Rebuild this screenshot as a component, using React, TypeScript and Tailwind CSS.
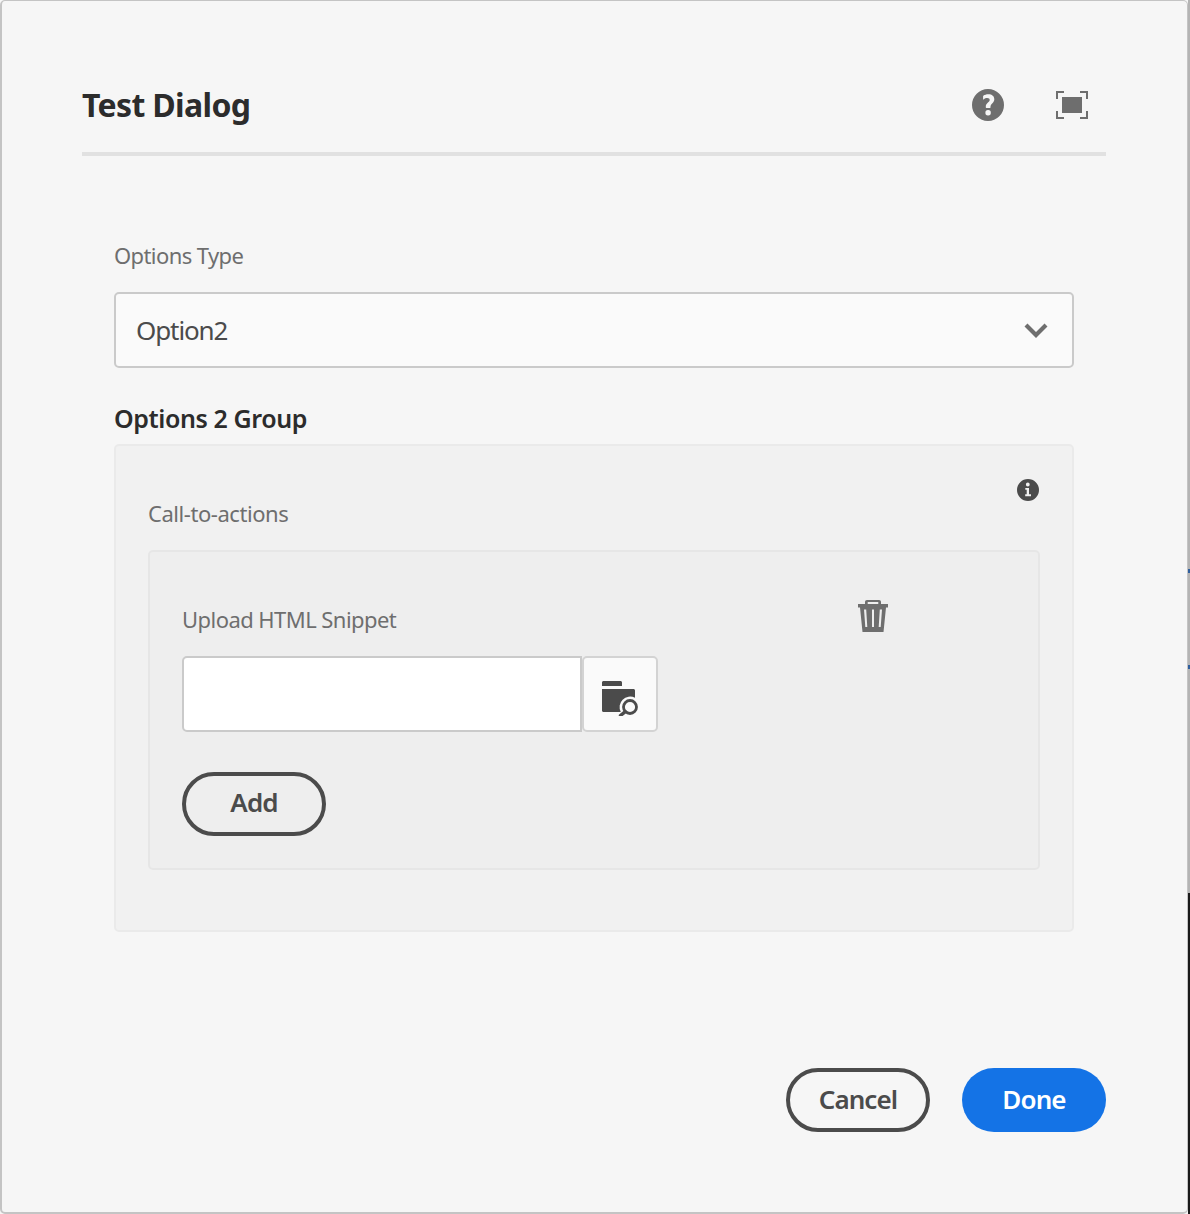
import React from "react";

const font = { fontFamily: '"Noto Sans", sans-serif' };

function HelpIcon() {
  return (
    <svg width="36" height="36" viewBox="0 0 36 36" className="block">
      <path fill="#6e6e6e" fillRule="evenodd" d="M18 2a16 16 0 1 0 0 32 16 16 0 0 0 0-32Zm.1 26.500a2.600 2.600 0 0 1-2.700-2.700 2.600 2.600 0 0 1 2.700-2.700 2.600 2.600 0 0 1 2.700 2.700 2.600 2.600 0 0 1-2.700 2.700Zm2.400-8.900v.9c0 .3-.2.5-.5.5h-3.700c-.3 0-.5-.2-.5-.5v-1.300c0-3.300 3.900-4.200 3.900-6.300 0-1.100-.9-1.800-2.400-1.800-1.400 0-2.600.5-3.700 1.400-.2.2-.5.1-.5-.2V9.300c0-.2 0-.4.2-.5 1.400-1 3-1.500 5-1.500 3.800 0 6 2 6 5 0 3.700-3.800 4.700-3.800 7.300Z" />
    </svg>
  );
}

function FullscreenIcon() {
  return (
    <svg width="36" height="36" viewBox="0 0 36 36" className="block">
      <g fill="#6e6e6e">
        <rect x="8" y="10" width="20" height="16" />
        <path d="M2 4h8v2H4v6H2ZM26 4h8v8h-2V6h-6ZM2 24h2v6h6v2H2ZM32 24h2v8h-8v-2h6Z" />
      </g>
    </svg>
  );
}

function ChevronIcon() {
  return (
    <svg width="24" height="16" viewBox="0 0 24 16" className="block">
      <path d="M2 3l10 10L22 3" fill="none" stroke="#6e6e6e" strokeWidth="4.200" />
    </svg>
  );
}

function InfoIcon() {
  return (
    <svg width="22" height="22" viewBox="0 0 22 22" className="block">
      <path fill="#4b4b4b" fillRule="evenodd" d="M11 0a11 11 0 1 0 0 22 11 11 0 0 0 0-22Zm-.2 3.600a1.900 1.900 0 1 1 0 3.800 1.900 1.900 0 0 1 0-3.800ZM14 17.200H8.200v-1.900h1.500v-4.600H8.300V8.900H12v6.400h2Z" />
    </svg>
  );
}

function TrashIcon() {
  return (
    <svg width="30" height="32" viewBox="0 0 30 32" className="block">
      <path fill="#6e6e6e" fillRule="evenodd" d="M9 0h12c1.200 0 2 .8 2 2v2h7v3.500h-2L25.500 32h-21L2 7.500H0V4h7V2c0-1.200.8-2 2-2Zm.7 2v2h10.600V2ZM6 9.500 7.300 27h2L8.200 9.500Zm8 0V27h2V9.500Zm7.800 0L20.700 27h2L24 9.500Z" />
    </svg>
  );
}

function FolderSearchIcon() {
  return (
    <svg width="38" height="36" viewBox="0 0 38 36" className="block">
      <path fill="#4b4b4b" d="M1 2.500C1 1.700 1.700 1 2.500 1h17c.8 0 1.500.7 1.500 1.500V6H1ZM1 9h31.500c.8 0 1.500.7 1.500 1.500v7.300A10.500 10.500 0 0 0 19.800 32H2.500C1.700 32 1 31.300 1 30.500Z" />
      <g fill="none" stroke="#4b4b4b">
        <circle cx="29" cy="27" r="6.500" strokeWidth="2.800" />
        <path d="M24.300 31.700 19.500 35.500" strokeWidth="3.400" strokeLinecap="round" />
      </g>
    </svg>
  );
}

export default function App() {
  return (
    <div style={font} className="flex h-[1214px] w-[1190px] overflow-hidden bg-[#f6f6f6]">
      <div className="flex h-full w-[1188px] flex-col rounded-[5px] border-b-2 border-l-2 border-r border-t border-[#c4c4c4] bg-[#f6f6f6] pl-[80px] pr-[81px]">
        <header className="flex h-[155px] shrink-0 items-start justify-between border-b-4 border-[#e1e1e1] pt-[82px]">
          <h1 className="text-[32px] font-bold leading-[44px] tracking-[-0.65px] text-[#2c2c2c]">Test Dialog</h1>
          <div className="mr-[16px] mt-[4px] flex items-center gap-[48px]">
            <HelpIcon />
            <FullscreenIcon />
          </div>
        </header>

        <main className="flex flex-col px-[32px] pt-[82px]">
          <label className="h-[54px] text-[22px] leading-[34px] tracking-[-0.6px] text-[#6e6e6e]">Options Type</label>
          <div className="flex h-[76px] items-center justify-between rounded-[5px] border-2 border-[#cacaca] bg-[#fafafa] pl-[20px] pr-[24px]">
            <span className="text-[26px] tracking-[-1.100px] text-[#4b4b4b]">Option2</span>
            <ChevronIcon />
          </div>

          <h2 className="mt-[31px] h-[45px] text-[25px] font-semibold leading-[38px] tracking-[-0.4px] text-[#2c2c2c]">Options 2 Group</h2>

          <section className="relative h-[488px] rounded-[5px] border-2 border-[#eaeaea] bg-[#f1f1f1] px-[32px] pt-[50px]">
            <span className="absolute right-[33px] top-[33px]">
              <InfoIcon />
            </span>
            <div className="h-[54px] text-[22px] leading-[34px] tracking-[-0.45px] text-[#6e6e6e]">Call-to-actions</div>

            <div className="relative h-[320px] rounded-[5px] border-2 border-[#e6e6e6] bg-[#eeeeee] px-[32px] pt-[50px]">
              <span className="absolute left-[708px] top-[48px]">
                <TrashIcon />
              </span>
              <div className="h-[54px] text-[22px] leading-[34px] tracking-[-0.55px] text-[#6e6e6e]">Upload HTML Snippet</div>
              <div className="flex h-[76px]">
                <div className="h-full w-[400px] rounded-l-[5px] border-2 border-[#cacaca] bg-white" />
                <button className="flex h-full w-[76px] items-center justify-center rounded-[5px] border-2 border-[#d3d3d3] bg-[#fafafa] pt-[8px]">
                  <FolderSearchIcon />
                </button>
              </div>
              <button className="mt-[40px] h-[64px] w-[144px] rounded-full border-4 border-[#4b4b4b] pb-[3px] text-[26px] font-semibold tracking-[-0.9px] text-[#4b4b4b]">Add</button>
            </div>
          </section>
        </main>

        <footer className="mt-[136px] flex justify-end gap-[32px]">
          <button className="h-[64px] w-[144px] rounded-full border-4 border-[#4b4b4b] pb-[2px] text-[26px] font-semibold tracking-[-0.9px] text-[#4b4b4b]">Cancel</button>
          <button className="h-[64px] w-[144px] rounded-full bg-[#1473e6] pb-[2px] text-[26px] font-semibold tracking-[-0.9px] text-white">Done</button>
        </footer>
      </div>

      <div className="flex h-full w-[2px] flex-col">
        <div className="h-[569px] bg-[#b4b4b4]" />
        <div className="h-[4px] bg-[#2f5f9e]" />
        <div className="h-[92px] bg-[#b4b4b4]" />
        <div className="h-[4px] bg-[#2f5f9e]" />
        <div className="h-[224px] bg-[#b4b4b4]" />
        <div className="flex-1 bg-[#1a1a1a]" />
      </div>
    </div>
  );
}
